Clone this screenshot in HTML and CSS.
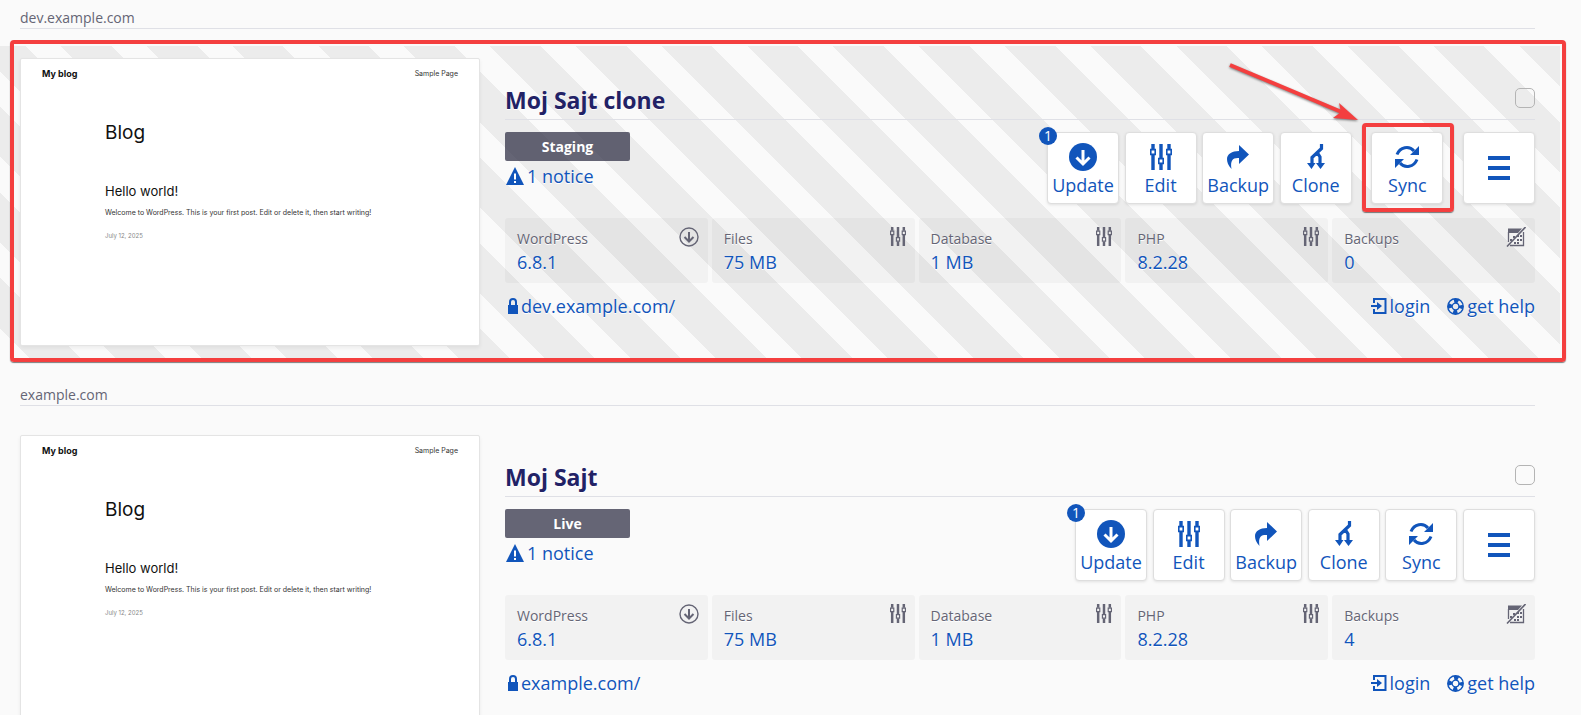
FILE: index.html
```html
<!DOCTYPE html>
<html lang="en">
<head>
    <meta charset="UTF-8">
    <meta name="viewport" content="width=device-width, initial-scale=1.0">
    <title>WordPress Sites</title>
    <link rel="stylesheet" href="styles.css">
</head>
<body>
    <!-- Shared icons -->
    <svg class="icon-defs" aria-hidden="true">
        <symbol id="i-update" viewBox="0 0 28 28">
            <circle cx="14" cy="14" r="14" fill="currentColor"/>
            <path d="M14 7v13M7.500 14.500l6.500 6.500 6.500-6.500" fill="none" stroke="#fff" stroke-width="3"/>
        </symbol>
        <symbol id="i-sliders" viewBox="0 0 22 26">
            <path d="M3 0v5M3 11v15M11 0v14M11 20v6M19 0v5M19 11v15" fill="none" stroke="currentColor" stroke-width="3.400"/>
            <path d="M.8 5.600h4.400v4.800H.8zM8.800 14.600h4.400v4.800H8.800zM16.800 5.600h4.400v4.800h-4.400z" fill="none" stroke="currentColor" stroke-width="1.600"/>
        </symbol>
        <symbol id="i-backup" viewBox="0 0 22 24">
            <path d="M12 0l10 9.500-10 9.500v-6C6 12.500 3 15 4.500 24C1 20 0 17 0 14C0 9 5 6 12 6z" fill="currentColor"/>
        </symbol>
        <symbol id="i-clone" viewBox="0 0 18 26">
            <path d="M14.500 0v4.500L5 13.500v6M9 10.500h2.500L13 13v7" fill="none" stroke="currentColor" stroke-width="3.200"/>
            <path d="M0 19h8.500l-4 6zM9 19h9l-4.500 6z" fill="currentColor"/>
        </symbol>
        <symbol id="i-sync" viewBox="0 0 24 24">
            <path d="M2 9.500C5 2 14 0 19 6M22 14.500C19 22 10 24 5 18" fill="none" stroke="currentColor" stroke-width="3"/>
            <path d="M24 1v9h-9zM0 23v-9h9z" fill="currentColor"/>
        </symbol>
        <symbol id="i-menu" viewBox="0 0 22 24">
            <path d="M0 2h22M0 12h22M0 22h22" stroke="currentColor" stroke-width="4"/>
        </symbol>
        <symbol id="i-notice" viewBox="0 0 18 18">
            <path d="M9 0l9 18H0z" fill="currentColor"/>
            <path d="M9 6.500v6M9 14v2" stroke="#fff" stroke-width="2"/>
        </symbol>
        <symbol id="i-version" viewBox="0 0 20 20">
            <circle cx="10" cy="10" r="9" fill="none" stroke="currentColor" stroke-width="1.400"/>
            <path d="M10 5v9M5.500 10l4.500 4.500 4.500-4.500" fill="none" stroke="currentColor" stroke-width="2"/>
        </symbol>
        <symbol id="i-calendar" viewBox="0 0 20 20">
            <path d="M2 1.500h14l-4 4.500H2z" fill="currentColor"/>
            <path d="M2.500 5v10M4 18.500h13.500V5" fill="none" stroke="currentColor" stroke-width="1.300"/>
            <path d="M11 8h2v2h-2zM14 8h2v2h-2zM7 9h2v2H7zM4 12h2v2H4zM11 12h2v2h-2zM14 12h2v2h-2zM8 15h2v2H8zM11 15h2v2h-2z" fill="currentColor"/>
            <path d="M1 19.500L19.500 0" stroke="currentColor" stroke-width="1.600"/>
        </symbol>
        <symbol id="i-lock" viewBox="0 0 10 16">
            <path d="M2 8V4a3 3 0 0 1 6 0v4" fill="none" stroke="currentColor" stroke-width="2"/>
            <path d="M0 7h10v9H0z" fill="currentColor"/>
        </symbol>
        <symbol id="i-login" viewBox="0 0 16 16">
            <path d="M3 5V1h11.500v14H3v-4" fill="none" stroke="currentColor" stroke-width="2"/>
            <path d="M0 7h6V4l5 4-5 4V9H0z" fill="currentColor"/>
        </symbol>
        <symbol id="i-help" viewBox="0 0 16 16">
            <circle cx="8" cy="8" r="7.300" fill="none" stroke="currentColor" stroke-width="1.300"/>
            <circle cx="8" cy="8" r="3.200" fill="none" stroke="currentColor" stroke-width="1.200"/>
            <circle cx="8" cy="8" r="5.200" fill="none" stroke="currentColor" stroke-width="4" stroke-dasharray="4 4.168" stroke-dashoffset="2"/>
        </symbol>
    </svg>

    <main class="sites">
        <section class="site">
            <h2 class="domain">dev.example.com</h2>
            <div class="install staging">
                <div class="thumb">
                    <div class="thumb-nav"><strong>My blog</strong><span>Sample Page</span></div>
                    <div class="thumb-body">
                        <p class="thumb-title">Blog</p>
                        <p class="thumb-post">Hello world!</p>
                        <p class="thumb-text">Welcome to WordPress. This is your first post. Edit or delete it, then start writing!</p>
                        <p class="thumb-date">July 12, 2025</p>
                    </div>
                </div>
                <div class="details">
                    <div class="title-row">
                        <h3>Moj Sajt clone</h3>
                        <input type="checkbox" class="select" aria-label="Select Moj Sajt clone">
                    </div>
                    <div class="toolbar">
                        <div class="status">
                            <span class="label">Staging</span>
                            <a href="#" class="notice"><svg width="18" height="18"><use href="#i-notice"/></svg>1 notice</a>
                        </div>
                        <div class="actions">
                            <button type="button" class="action"><span class="count">1</span><svg width="28" height="28"><use href="#i-update"/></svg>Update</button>
                            <button type="button" class="action"><svg width="22" height="28"><use href="#i-sliders"/></svg>Edit</button>
                            <button type="button" class="action"><svg width="22" height="28"><use href="#i-backup"/></svg>Backup</button>
                            <button type="button" class="action"><svg width="18" height="28"><use href="#i-clone"/></svg>Clone</button>
                            <button type="button" class="action marked"><svg width="24" height="28"><use href="#i-sync"/></svg>Sync
                                <svg class="arrow" viewBox="0 0 132 60" width="132" height="60" aria-hidden="true">
                                    <path d="M2 3L116 51" stroke="#f43f3f" stroke-width="4"/>
                                    <path d="M130 58l-25-2 8-6-2-9z" fill="#f43f3f"/>
                                </svg>
                            </button>
                            <button type="button" class="action menu" aria-label="Menu"><svg width="22" height="24"><use href="#i-menu"/></svg></button>
                        </div>
                    </div>
                    <div class="stats">
                        <div class="stat"><div><span>WordPress</span><a href="#">6.8.1</a></div><svg width="20" height="20"><use href="#i-version"/></svg></div>
                        <div class="stat"><div><span>Files</span><a href="#">75 MB</a></div><svg width="16" height="19"><use href="#i-sliders"/></svg></div>
                        <div class="stat"><div><span>Database</span><a href="#">1 MB</a></div><svg width="16" height="19"><use href="#i-sliders"/></svg></div>
                        <div class="stat"><div><span>PHP</span><a href="#">8.2.28</a></div><svg width="16" height="19"><use href="#i-sliders"/></svg></div>
                        <div class="stat"><div><span>Backups</span><a href="#">0</a></div><svg width="20" height="20"><use href="#i-calendar"/></svg></div>
                    </div>
                    <div class="links">
                        <a href="#" class="url"><svg width="10" height="16"><use href="#i-lock"/></svg>dev.example.com/</a>
                        <a href="#"><svg width="16" height="16"><use href="#i-login"/></svg>login</a>
                        <a href="#"><svg width="17" height="17"><use href="#i-help"/></svg>get help</a>
                    </div>
                </div>
            </div>
        </section>

        <section class="site">
            <h2 class="domain">example.com</h2>
            <div class="install">
                <div class="thumb">
                    <div class="thumb-nav"><strong>My blog</strong><span>Sample Page</span></div>
                    <div class="thumb-body">
                        <p class="thumb-title">Blog</p>
                        <p class="thumb-post">Hello world!</p>
                        <p class="thumb-text">Welcome to WordPress. This is your first post. Edit or delete it, then start writing!</p>
                        <p class="thumb-date">July 12, 2025</p>
                    </div>
                </div>
                <div class="details">
                    <div class="title-row">
                        <h3>Moj Sajt</h3>
                        <input type="checkbox" class="select" aria-label="Select Moj Sajt">
                    </div>
                    <div class="toolbar">
                        <div class="status">
                            <span class="label">Live</span>
                            <a href="#" class="notice"><svg width="18" height="18"><use href="#i-notice"/></svg>1 notice</a>
                        </div>
                        <div class="actions">
                            <button type="button" class="action"><span class="count">1</span><svg width="28" height="28"><use href="#i-update"/></svg>Update</button>
                            <button type="button" class="action"><svg width="22" height="28"><use href="#i-sliders"/></svg>Edit</button>
                            <button type="button" class="action"><svg width="22" height="28"><use href="#i-backup"/></svg>Backup</button>
                            <button type="button" class="action"><svg width="18" height="28"><use href="#i-clone"/></svg>Clone</button>
                            <button type="button" class="action"><svg width="24" height="28"><use href="#i-sync"/></svg>Sync</button>
                            <button type="button" class="action menu" aria-label="Menu"><svg width="22" height="24"><use href="#i-menu"/></svg></button>
                        </div>
                    </div>
                    <div class="stats">
                        <div class="stat"><div><span>WordPress</span><a href="#">6.8.1</a></div><svg width="20" height="20"><use href="#i-version"/></svg></div>
                        <div class="stat"><div><span>Files</span><a href="#">75 MB</a></div><svg width="16" height="19"><use href="#i-sliders"/></svg></div>
                        <div class="stat"><div><span>Database</span><a href="#">1 MB</a></div><svg width="16" height="19"><use href="#i-sliders"/></svg></div>
                        <div class="stat"><div><span>PHP</span><a href="#">8.2.28</a></div><svg width="16" height="19"><use href="#i-sliders"/></svg></div>
                        <div class="stat"><div><span>Backups</span><a href="#">4</a></div><svg width="20" height="20"><use href="#i-calendar"/></svg></div>
                    </div>
                    <div class="links">
                        <a href="#" class="url"><svg width="10" height="16"><use href="#i-lock"/></svg>example.com/</a>
                        <a href="#"><svg width="16" height="16"><use href="#i-login"/></svg>login</a>
                        <a href="#"><svg width="17" height="17"><use href="#i-help"/></svg>get help</a>
                    </div>
                </div>
            </div>
        </section>
    </main>
</body>
</html>
```
FILE: styles.css
```css
* {
    box-sizing: border-box;
}
body {
    margin: 0;
    background: #fafafa;
    color: #656575;
    font-family: "Open Sans", Arial, sans-serif;
    font-size: 14px;
    line-height: 20px;
}
a {
    color: #1155bb;
    text-decoration: none;
}
h2, h3, p {
    margin: 0;
}
.icon-defs {
    display: none;
}
.sites {
    height: 100vh;
    overflow-y: auto;
    scrollbar-width: none;
    padding: 8px 21px 0 0;
}
.site + .site {
    margin-top: 27px;
}
.domain {
    margin: 0 25px 17px 20px;
    font-size: 14px;
    font-weight: 400;
    border-bottom: 1px solid #dfe0e6;
}
.install {
    position: relative;
    display: flex;
    gap: 25px;
    padding: 12px 25px 12px 20px;
    text-shadow: 0 1px 0 #fff;
}
.staging {
    background: repeating-linear-gradient(45deg, #fafafa 0 1.58%, #ececec 1.58% 4.28%, #fafafa 4.28% 4.583%);
}
/* red frame round the staging install */
.staging::after, .marked::after {
    content: "";
    position: absolute;
    border: 4px solid #f43f3f;
    border-radius: 4px;
    box-shadow: 0 1px 1px rgba(0, 0, 0, 0.5);
    pointer-events: none;
}
.staging::after {
    inset: -6px -6px -4px 10px;
}
.marked::after {
    inset: -10px -12px -9px -10px;
}

/* Site preview */
.thumb {
    flex: 0 0 460px;
    height: 288px;
    padding: 8px 21px;
    background: #fff;
    border: 1px solid #e4e4e4;
    border-radius: 2px;
    box-shadow: 0 2px 4px rgba(0, 0, 0, 0.06);
    font-family: Inter, sans-serif;
    font-size: 7px;
    line-height: 14px;
    color: #333;
}
.thumb-nav {
    display: flex;
    justify-content: space-between;
}
.thumb-nav strong {
    font-size: 9px;
    color: #111;
}
.thumb-body {
    padding: 40px 0 0 63px;
    color: #111;
}
.thumb-title {
    font-size: 19px;
    line-height: 24px;
    margin-bottom: 36px;
}
.thumb-post {
    font-size: 13px;
    line-height: 20px;
    margin-bottom: 5px;
}
.thumb-text {
    color: #333;
}
.thumb-date {
    margin-top: 9px;
    font-size: 6px;
    color: #888;
}

/* Details */
.details {
    flex: 1;
    min-width: 0;
    padding-top: 23px;
}
.title-row {
    display: flex;
    justify-content: space-between;
    height: 39px;
    border-bottom: 1px solid #dfe0e6;
}
h3 {
    font-size: 23px;
    line-height: 38px;
    color: #222266;
}
.select {
    appearance: none;
    width: 20px;
    height: 20px;
    margin: 7px 0 0;
    border: 1px solid #b4b4b4;
    border-radius: 5px;
}
.toolbar {
    display: flex;
    justify-content: space-between;
    margin: 12px 0 14px;
}
.label {
    display: block;
    width: 125px;
    background: rgba(51, 51, 72, 0.75);
    border-radius: 2px;
    color: #fff;
    font-weight: 700;
    line-height: 29px;
    text-align: center;
    text-shadow: none;
}
.notice {
    display: flex;
    align-items: center;
    gap: 3px;
    margin: 3px 0 0 1px;
    font-size: 18px;
    line-height: 24px;
}
.actions {
    display: flex;
    justify-content: space-between;
    width: 460px;
}
.staging .actions {
    width: 488px;
}
.action {
    position: relative;
    display: flex;
    flex-direction: column;
    align-items: center;
    gap: 2px;
    width: 72px;
    height: 72px;
    padding: 10px 0 0;
    background: #fff;
    border: 1px solid #dedede;
    border-radius: 4px;
    box-shadow: 0 1px 3px rgba(0, 0, 0, 0.1);
    color: #1155bb;
    font-family: inherit;
    font-size: 18px;
    line-height: 24px;
    cursor: pointer;
}
.action:hover {
    border-color: #1155bb;
}
.marked {
    margin: 0 14px;
}
.menu {
    justify-content: center;
    padding: 0;
}
.count {
    position: absolute;
    top: -6px;
    left: -9px;
    width: 18px;
    height: 18px;
    border-radius: 50%;
    background: #1155bb;
    color: #fff;
    font-size: 14px;
    line-height: 18px;
}
.arrow {
    position: absolute;
    right: 82px;
    bottom: 81px;
    filter: drop-shadow(0 1px 1px rgba(0, 0, 0, 0.5));
}
.stats {
    display: grid;
    grid-template-columns: repeat(5, 1fr);
    gap: 4px;
}
.stat {
    display: flex;
    justify-content: space-between;
    padding: 9px 9px 9px 12px;
    background: rgba(0, 0, 0, 0.03);
    border-radius: 3px;
}
.stat span, .stat a {
    display: block;
}
.stat span {
    margin: 2px 0 1px;
}
.stat a {
    font-size: 18px;
    line-height: 24px;
}
.links {
    display: flex;
    gap: 17px;
    margin-top: 11px;
    font-size: 18px;
    line-height: 24px;
}
.links a {
    display: flex;
    align-items: center;
    gap: 3px;
}
.links .url {
    margin: 0 auto 0 3px;
}
```
